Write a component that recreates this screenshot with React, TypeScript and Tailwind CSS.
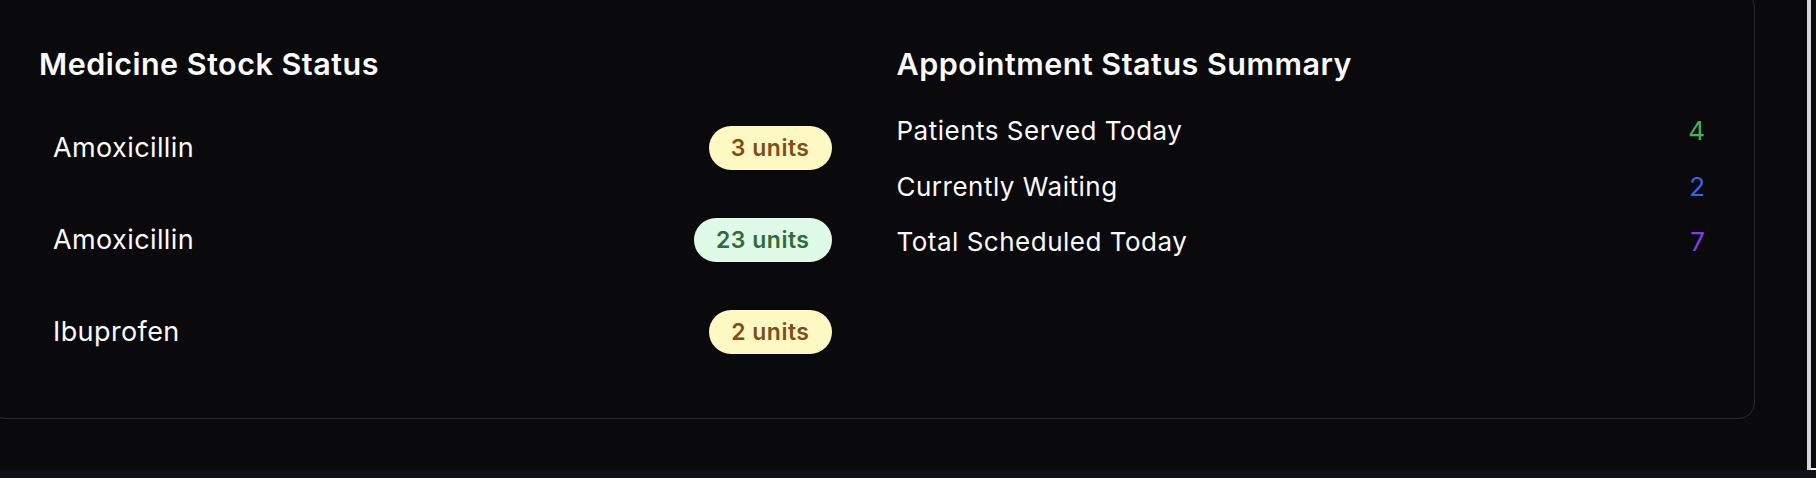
import React from "react";

const stock = [
  { name: "Amoxicillin", units: "3 units", tone: "low" },
  { name: "Amoxicillin", units: "23 units", tone: "ok" },
  { name: "Ibuprofen", units: "2 units", tone: "low" },
];

const summary = [
  { label: "Patients Served Today", value: "4", color: "text-[#4caf50]" },
  { label: "Currently Waiting", value: "2", color: "text-[#3667e6]" },
  { label: "Total Scheduled Today", value: "7", color: "text-[#8a3be8]" },
];

export default function App() {
  return (
    <div
      className="flex h-[478px] w-full flex-col overflow-hidden bg-[#0a0a0c] text-[#fafafa]"
      style={{ fontFamily: "Inter, 'Noto Sans', sans-serif" }}
    >
      <div className="flex h-[470px] w-full">
        <div className="min-w-0 flex-1 overflow-hidden">
          <div className="-ml-[11px] -mt-[9px] h-[428px] w-[1766px] rounded-[16px] border border-[#2a2a2e] px-[49px] pt-[50px]">
            <div className="grid grid-cols-2 gap-x-[49px]">
              <section>
                <h2 className="text-[30.5px] font-semibold leading-[43px] tracking-[0.5px]">
                  Medicine Stock Status
                </h2>
                <ul className="mt-[17px] flex flex-col">
                  {stock.map((s, i) => (
                    <li
                      key={i}
                      className="flex h-[92px] items-center justify-between pl-[14px] pr-[16px]"
                    >
                      <span className="text-[27px] leading-[40px] tracking-[0.4px]">{s.name}</span>
                      <span
                        className={
                          s.tone === "low"
                            ? "flex h-[44px] items-center rounded-full bg-[#fef9c3] px-[22px] text-[23px] font-semibold tracking-[0.5px] text-[#7f4e17]"
                            : "flex h-[44px] items-center rounded-full bg-[#dffbe8] px-[22px] text-[23px] font-semibold tracking-[0.5px] text-[#2f6b3b]"
                        }
                      >
                        {s.units}
                      </span>
                    </li>
                  ))}
                </ul>
              </section>
              <section>
                <h2 className="text-[30.5px] font-semibold leading-[43px] tracking-[0.5px]">
                  Appointment Status Summary
                </h2>
                <ul className="mt-[27px] flex flex-col gap-[18.7px]">
                  {summary.map((r) => (
                    <li key={r.label} className="flex h-[37px] items-center justify-between">
                      <span className="text-[26px] leading-[37px] tracking-[0.5px]">{r.label}</span>
                      <span className={`text-[26px] leading-[37px] ${r.color}`}>{r.value}</span>
                    </li>
                  ))}
                </ul>
              </section>
            </div>
          </div>
        </div>
        <div className="w-[4px] bg-[#d8d8d8]" />
        <div className="flex w-[5px] flex-col">
          <div className="flex-1" />
          <div className="h-[2px] bg-white" />
        </div>
      </div>
      <div className="h-[8px] w-full bg-[#111217]" />
    </div>
  );
}
